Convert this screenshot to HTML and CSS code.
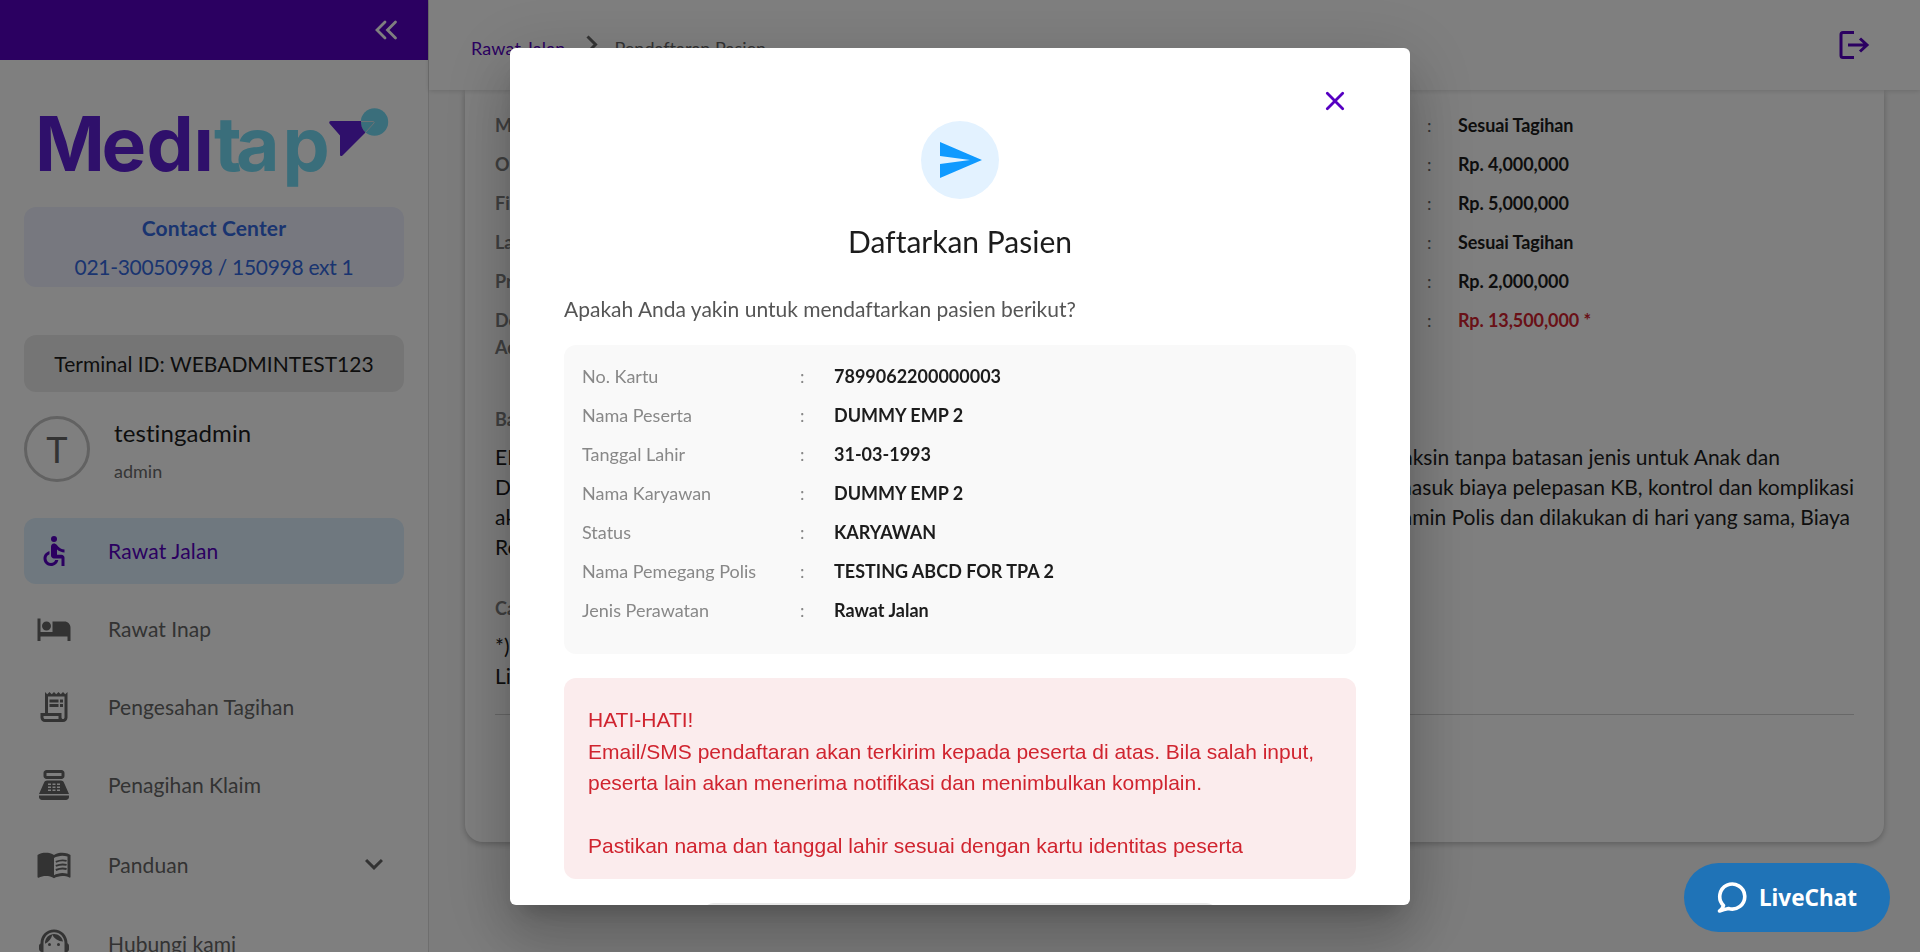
FILE: index.html
```html
<!DOCTYPE html>
<html lang="id">
<head>
<meta charset="utf-8">
<title>Meditap - Pendaftaran Pasien</title>
<link rel="stylesheet" href="styles.css">
</head>
<body>
<div class="app">
  <aside class="sidebar">
    <div class="sidebar-top">
      <svg class="collapse" viewBox="0 0 24 20"><path d="M11 2 3 10l8 8M21.500 2l-8 8 8 8"/></svg>
    </div>
    <svg class="logo" viewBox="0 0 360 90">
      <text class="wordmark" y="67" x="7 73.500 118.500 165.500 186 208 254.500"><tspan class="logo-purple">Medı</tspan><tspan class="logo-teal">tap</tspan></text>
      <circle class="logo-teal" cx="346.500" cy="18" r="13.700"/>
      <path class="logo-purple" d="M303 17h30q-.5 7 4.500 11.500L314.500 51.500q-2.500 1.500-2.500-1V31.500L301.500 19.500q-1-2.500 1.500-2.500z"/>
      <path class="logo-gap" d="M333 17.500h12.500q1.200.5.5 1.500L337.500 28.500"/>
    </svg>
    <div class="contact"><b>Contact Center</b><span>021-30050998 / 150998 ext 1</span></div>
    <div class="terminal">Terminal ID: WEBADMINTEST123</div>
    <div class="user">
      <div class="avatar">T</div>
      <div class="user-text"><span class="user-name">testingadmin</span><span class="user-role">admin</span></div>
    </div>
    <nav class="menu">
      <a class="item active"><svg viewBox="0 0 24 24"><circle cx="12" cy="4" r="2"/><path d="M19 13v-2c-1.540.02-3.090-.75-4.070-1.830l-1.290-1.430c-.17-.19-.38-.34-.61-.45-.01 0-.01-.01-.02-.01H13c-.35-.2-.75-.3-1.190-.26C10.760 7.110 10 8.040 10 9.090V15c0 1.100.9 2 2 2h5v5h2v-5.500c0-1.100-.9-2-2-2h-3v-3.450c1.290 1.070 3.250 1.940 5 1.950zm-6.170 5c-.41 1.160-1.520 2-2.830 2-1.660 0-3-1.340-3-3 0-1.310.84-2.410 2-2.830V12.100c-2.280.46-4 2.480-4 4.900 0 2.760 2.240 5 5 5 2.420 0 4.440-1.720 4.900-4h-2.070z"/></svg><span>Rawat Jalan</span></a>
      <a class="item"><svg viewBox="0 0 24 24"><path d="M7 13c1.660 0 3-1.340 3-3S8.660 7 7 7s-3 1.340-3 3 1.340 3 3 3zm12-6h-8v7H3V5H1v15h2v-3h18v3h2v-9c0-2.210-1.790-4-4-4z"/></svg><span>Rawat Inap</span></a>
      <a class="item"><svg viewBox="0 0 24 24"><path d="M19.500 3.500 18 2l-1.500 1.500L15 2l-1.500 1.500L12 2l-1.500 1.500L9 2 7.500 3.500 6 2v14H3v3c0 1.660 1.340 3 3 3h12c1.660 0 3-1.340 3-3V2l-1.500 1.500zM15 20H6c-.55 0-1-.45-1-1v-1h10v2zm4-1c0 .55-.45 1-1 1s-1-.45-1-1v-3H8V5h11v14z"/><path d="M9 7h6v2H9zM16 7h2v2h-2zM9 10h6v2H9zM16 10h2v2h-2z"/></svg><span>Pengesahan Tagihan</span></a>
      <a class="item"><svg viewBox="0 0 24 24"><path fill-rule="evenodd" d="M17 2H7c-1.100 0-2 .9-2 2v2c0 1.100.9 2 2 2h10c1.100 0 2-.9 2-2V4c0-1.100-.9-2-2-2zm0 4H7V4h10v2zM20 22H4c-1.100 0-2-.9-2-2v-1h20v1c0 1.100-.9 2-2 2zM18.530 10.190C18.210 9.470 17.490 9 16.700 9H7.300c-.79 0-1.510.47-1.830 1.190L2 18h20l-3.470-7.810zM8 15h2v1H8zM8 13h2v1H8zM8 11h2v1H8zM11 15h2v1h-2zM11 13h2v1h-2zM11 11h2v1h-2zM14 15h2v1h-2zM14 13h2v1h-2zM14 11h2v1h-2z"/></svg><span>Penagihan Klaim</span></a>
      <a class="item late"><svg viewBox="0 0 24 24"><path d="M21 5c-1.110-.35-2.330-.5-3.500-.5-1.950 0-4.050.4-5.500 1.500-1.450-1.100-3.550-1.500-5.500-1.500S2.450 4.900 1 6v14.650c0 .25.25.5.5.5.1 0 .15-.05.25-.05C3.100 20.450 5.050 20 6.500 20c1.950 0 4.050.4 5.500 1.500 1.350-.85 3.800-1.500 5.500-1.500 1.650 0 3.350.3 4.750 1.050.1.05.15.05.25.05.25 0 .5-.25.5-.5V6c-.6-.45-1.250-.75-2-1zm0 13.500c-1.100-.35-2.300-.5-3.500-.5-1.700 0-4.150.65-5.500 1.500V8c1.350-.85 3.800-1.500 5.500-1.500 1.200 0 2.400.15 3.500.5v11.500z"/><path class="lines" d="M13.200 10.600q3.600-1.600 7.200-.7M13.200 13.300q3.600-1.600 7.200-.7M13.200 16q3.600-1.600 7.200-.7"/></svg><span>Panduan</span><svg class="expand" viewBox="0 0 24 24"><path d="M16.590 8.590 12 13.170 7.410 8.590 6 10l6 6 6-6z"/></svg></a>
      <a class="item late"><svg viewBox="0 0 24 24"><path d="M21 12.220C21 6.730 16.740 3 12 3c-4.690 0-9 3.650-9 9.280-.6.34-1 .98-1 1.720v2c0 1.100.9 2 2 2h1v-6.100c0-3.870 3.130-7 7-7s7 3.130 7 7V19h-8v2h8c1.100 0 2-.9 2-2v-1.220c.59-.31 1-.92 1-1.640v-2.300c0-.7-.41-1.310-1-1.620z"/><circle cx="9" cy="13" r="1"/><circle cx="15" cy="13" r="1"/><path d="M18 11.030C17.520 8.180 15.040 6 12.050 6c-3.030 0-6.290 2.510-6.030 6.450 2.470-1.010 4.330-3.210 4.860-5.890 1.310 2.630 4 4.440 7.120 4.470z"/></svg><span>Hubungi kami</span></a>
    </nav>
  </aside>

  <main class="main">
    <header class="header">
      <div class="crumbs">
        <a class="crumb-link">Rawat Jalan</a>
        <svg class="crumb-sep" viewBox="0 0 12 20"><path d="m1.500 1.500 8 8-8 8"/></svg>
        <span>Pendaftaran Pasien</span>
      </div>
      <svg class="logout" viewBox="0 0 32 30"><path d="M16 2.500H5Q3 2.500 3 4.500v21Q3 27.500 5 27.500h11M10 15h19M22 8.500l7 6.500-7 6.500"/></svg>
    </header>
    <section class="card">
      <div class="benefits">
        <div class="benefit"><span>Maternity</span><i>:</i><b>Sesuai Tagihan</b></div>
        <div class="benefit"><span>Optical</span><i>:</i><b>Rp. 4,000,000</b></div>
        <div class="benefit"><span>First Aid</span><i>:</i><b>Rp. 5,000,000</b></div>
        <div class="benefit"><span>Lab</span><i>:</i><b>Sesuai Tagihan</b></div>
        <div class="benefit"><span>Prothese</span><i>:</i><b>Rp. 2,000,000</b></div>
        <div class="benefit total"><span>Dental<br>Advance</span><i>:</i><b>Rp. 13,500,000 *</b></div>
      </div>
      <h4 class="label">Batasan</h4>
      <div class="notes">
        <p><span>EKG</span><span class="end-a">Vaksin tanpa batasan jenis untuk Anak dan</span></p>
        <p><span>Dewasa</span><span>termasuk biaya pelepasan KB, kontrol dan komplikasi</span></p>
        <p><span>akibat</span><span class="end-b">Penjamin Polis dan dilakukan di hari yang sama, Biaya</span></p>
        <p><span>Resep</span></p>
      </div>
      <h4 class="label second">Catatan</h4>
      <div class="notes"><p>*)</p><p>Limit</p></div>
      <hr class="rule">
    </section>
  </main>
</div>

<div class="backdrop">
  <div class="dialog" role="dialog">
    <div class="dialog-close"><svg viewBox="0 0 20 20"><path d="m2.300 2.300 15.400 15.400M17.700 2.300 2.300 17.700"/></svg></div>
    <div class="send"><svg viewBox="0 0 24 24"><path d="M2.010 21 23 12 2.010 3 2 10l15 2-15 2z"/></svg></div>
    <h2 class="title">Daftarkan Pasien</h2>
    <p class="question">Apakah Anda yakin untuk mendaftarkan pasien berikut?</p>
    <div class="details">
      <div class="row"><span>No. Kartu</span><i>:</i><b>7899062200000003</b></div>
      <div class="row"><span>Nama Peserta</span><i>:</i><b>DUMMY EMP 2</b></div>
      <div class="row"><span>Tanggal Lahir</span><i>:</i><b>31-03-1993</b></div>
      <div class="row"><span>Nama Karyawan</span><i>:</i><b>DUMMY EMP 2</b></div>
      <div class="row"><span>Status</span><i>:</i><b>KARYAWAN</b></div>
      <div class="row"><span>Nama Pemegang Polis</span><i>:</i><b>TESTING ABCD FOR TPA 2</b></div>
      <div class="row"><span>Jenis Perawatan</span><i>:</i><b>Rawat Jalan</b></div>
    </div>
    <div class="warning">HATI-HATI!<br>Email/SMS pendaftaran akan terkirim kepada peserta di atas. Bila salah input,<br>peserta lain akan menerima notifikasi dan menimbulkan komplain.<br><br>Pastikan nama dan tanggal lahir sesuai dengan kartu identitas peserta</div>
    <div class="action"></div>
  </div>
</div>

<div class="livechat">
  <svg viewBox="0 0 30 32"><path d="M6.500 23.500A12.500 12.500 0 1 1 11.500 26.500Q7 27.500 2.500 29 5.500 27 6.500 23.500z"/></svg>
  <span>LiveChat</span>
</div>
</body>
</html>
```
FILE: styles.css
```css
* { box-sizing: border-box; }
body { margin: 0; height: 952px; overflow: hidden; font-family: Lato, "Liberation Sans", sans-serif; font-size: 21px; font-variant-ligatures: none; color: #1c1c1c; background: #f9f9f9; }
h2, h4, p { margin: 0; font-weight: 400; }
i { font-style: normal; }
.app { display: grid; grid-template-columns: 429px 1fr; height: 952px; overflow: hidden; }

/* Sidebar */
.sidebar { display: flex; flex-direction: column; height: 952px; overflow: hidden; background: #fff; border-right: 1px solid #dcdcdc; }
.sidebar-top { flex: none; height: 60px; background: #5600c2; display: flex; align-items: center; justify-content: flex-end; padding-right: 30px; }
.collapse { width: 24px; height: 20px; fill: none; stroke: #fff; stroke-width: 2.8; stroke-linecap: round; }
.logo { flex: none; width: 360px; height: 90px; margin: 44px 0 0 28px; overflow: visible; }
.wordmark { font-family: Inter, sans-serif; font-weight: 700; font-size: 75px; }
.logo-purple { fill: #5e20d6; }
.logo-teal { fill: #74dcf6; }
.logo-gap { fill: none; stroke: #d8e6ea; stroke-width: 1; }
.contact { flex: none; height: 80px; margin: 13px 24px 0; border-radius: 12px; background: #eef1fe; color: #3469e0; display: flex; flex-direction: column; align-items: center; line-height: 39px; padding-top: 1px; }
.contact b { letter-spacing: .15px; }
.contact span { letter-spacing: -.3px; }
.terminal { flex: none; height: 57px; margin: 47px 24px 0; border-radius: 12px; background: #ebebeb; text-align: center; line-height: 57px; }
.contact + .terminal { margin-top: 48px; }
.user { flex: none; display: flex; height: 66px; margin: 24px 24px 0; gap: 24px; }
.avatar { width: 66px; height: 66px; border: 3px solid #c4c4c4; border-radius: 50%; color: #666; font-size: 36px; line-height: 60px; text-align: center; }
.user-text { display: flex; flex-direction: column; }
.user-name { font-size: 24px; line-height: 34px; letter-spacing: .1px; }
.user-role { font-size: 18px; line-height: 27px; margin-top: 8px; color: #6c6c6c; }
.menu { display: flex; flex-direction: column; gap: 12px; margin: 36px 24px 0; }
.item { flex: none; display: flex; align-items: center; height: 66px; padding: 0 12px; border-radius: 12px; color: #666; fill: #666; }
.item svg { flex: none; width: 36px; height: 36px; }
.item span { flex: 1; margin-left: 36px; padding-bottom: 2px; letter-spacing: .06px; }
.item .expand { margin-right: 0; }
.item .lines { fill: none; stroke: #666; stroke-width: 1.3; }
.item.active { background: #def0ff; color: #5600c2; fill: #5600c2; }
.item.active span { letter-spacing: .2px; }
.item.late { margin-top: 1px; }
.item.late span { padding-bottom: 0; }

/* Page content */
.main { display: flex; flex-direction: column; }
.header { flex: none; height: 90px; padding: 7px 50px 0 42px; background: #fff; display: flex; align-items: center; justify-content: space-between; position: relative; z-index: 1; box-shadow: 0 1px 5px rgba(0,0,0,.14); }
.crumbs { display: flex; align-items: center; margin-top: -2px; font-size: 18px; color: #666; }
.crumb-link { color: #5600c2; letter-spacing: .15px; }
.crumb-sep { width: 12px; height: 20px; margin: -5px 17px 0 20px; fill: none; stroke: #666; stroke-width: 3; }
.logout { width: 32px; height: 30px; margin-top: -7px; fill: none; stroke: #5600c2; stroke-width: 3; }
.card { flex: none; height: 752px; margin: 0 36px; padding: 16px 30px 0; background: #fff; border-radius: 0 0 18px 18px; box-shadow: 0 2px 6px rgba(0,0,0,.25); }
.benefit { display: grid; grid-template-columns: 932px 31px 1fr; height: 39px; font-size: 18px; line-height: 39px; }
.benefit span { font-weight: 700; color: #808080; }
.benefit i { color: #666; }
.benefit b { font-weight: 700; letter-spacing: -.08px; }
.benefit.total { height: 66px; }
.total span { line-height: 27px; padding-top: 6px; }
.total b { color: #d3232f; }
.label { margin-top: 39px; font-size: 18px; font-weight: 700; color: #808080; line-height: 27px; }
.label.second { margin-top: 33px; }
.notes { margin-top: 9px; line-height: 30px; }
.notes p { display: flex; justify-content: space-between; white-space: nowrap; }
.end-a { margin-right: 74px; }
.end-b { margin-right: 4px; }
.rule { height: 1px; margin: 23px 0 0; border: 0; background: #d0d0d0; }

/* Dialog */
.backdrop { position: fixed; inset: 0; z-index: 10; background: rgba(0,0,0,.5); display: flex; justify-content: center; align-items: flex-start; padding-top: 48px; }
.dialog { width: 900px; height: 857px; overflow: hidden; background: #fff; border-radius: 6px; padding: 44px 54px 0; display: flex; flex-direction: column; box-shadow: 0 16px 22px -10px rgba(0,0,0,.2), 0 36px 57px 4px rgba(0,0,0,.14), 0 13px 69px 12px rgba(0,0,0,.12); }
.dialog > * { flex: none; }
.dialog-close { display: flex; justify-content: flex-end; height: 29px; padding-right: 11px; }
.dialog-close svg { width: 20px; height: 20px; margin-top: -1px; fill: none; stroke: #5600c2; stroke-width: 2.8; stroke-linecap: round; }
.send { width: 78px; height: 78px; border-radius: 50%; background: #e3f2ff; align-self: center; display: flex; align-items: center; justify-content: center; }
.send svg { width: 48px; height: 48px; fill: #109aff; }
.title { margin-top: 20px; font-size: 30px; line-height: 45px; text-align: center; }
.question { margin-top: 29px; line-height: 32px; color: #555; }
.details { margin-top: 20px; height: 309px; padding: 12px 18px; border-radius: 12px; background: #f9f9f9; font-size: 18px; }
.row { display: grid; grid-template-columns: 218px 34px 1fr; line-height: 39px; }
.row span, .row i { color: #888; }
.row b { font-weight: 700; }
.warning { margin-top: 24px; height: 201px; padding: 26px 24px 0; border-radius: 12px; background: #fbeced; color: #d0242f; font-family: "Liberation Sans", Arial, sans-serif; line-height: 31.5px; white-space: nowrap; }
.action { align-self: center; width: 516px; height: 54px; margin-top: 24px; border-radius: 12px; background: #e8e8e8; }

/* Chat launcher */
.livechat { position: fixed; right: 30px; bottom: 20px; z-index: 20; width: 206px; height: 69px; border-radius: 35px; background: #1f73b7; color: #fff; display: flex; align-items: center; padding-left: 33px; gap: 12px; font: 700 22.5px "Noto Sans", "Open Sans", sans-serif; }
.livechat svg { width: 30px; height: 32px; fill: none; stroke: #fff; stroke-width: 3.600; stroke-linejoin: round; }
```
